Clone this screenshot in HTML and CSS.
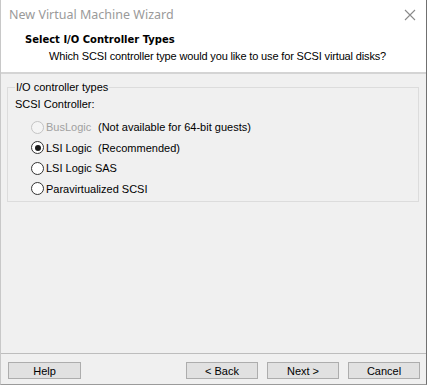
FILE: index.html
```html
<!DOCTYPE html>
<html>
<head>
<meta charset="utf-8">
<link rel="stylesheet" href="styles.css">
</head>
<body>
<div class="window">
  <div class="titlebar">
    <span class="title">New Virtual Machine Wizard</span>
    <svg class="close" width="12" height="12" viewBox="0 0 12 12"><path d="M1 1 L11 11 M11 1 L1 11" stroke="#8a8a8a" stroke-width="1.1" fill="none"/></svg>
  </div>
  <div class="header">
    <div class="h-title">Select I/O Controller Types</div>
    <div class="h-sub">Which SCSI controller type would you like to use for SCSI virtual disks?</div>
  </div>
  <div class="content">
    <fieldset class="group">
      <legend>I/O controller types</legend>
      <div class="label">SCSI Controller:</div>
      <div class="options">
        <div class="opt disabled"><span class="radio"></span><span class="name">BusLogic</span><span class="note">(Not available for 64-bit guests)</span></div>
        <div class="opt"><span class="radio checked"></span><span class="name">LSI Logic</span><span class="note">(Recommended)</span></div>
        <div class="opt"><span class="radio"></span><span class="name">LSI Logic SAS</span></div>
        <div class="opt"><span class="radio"></span><span class="name">Paravirtualized SCSI</span></div>
      </div>
    </fieldset>
  </div>
  <div class="footer">
    <button class="btn btn-help">Help</button>
    <div class="spacer"></div>
    <button class="btn">&lt; Back</button>
    <button class="btn">Next &gt;</button>
    <button class="btn">Cancel</button>
  </div>
</div>
</body>
</html>
```

FILE: styles.css
```css
* { box-sizing: border-box; }
html, body { margin: 0; padding: 0; background: #ffffff; }
body { width: 428px; height: 387px; overflow: hidden; font-family: "Liberation Sans", Arial, sans-serif; font-size: 11px; color: #000; }

.window {
  width: 427px;
  height: 385px;
  display: flex;
  flex-direction: column;
  background: #f0f0f0;
  border-right: 1px solid #707070;
  border-bottom: 1px solid #9a9a9a;
  border-left: 1px solid #c8c8c8;
}

.titlebar {
  height: 29px;
  background: #fff;
  display: flex;
  align-items: center;
  padding-left: 8px;
  padding-right: 10px;
}
.title { font-family: "Noto Sans", sans-serif; font-size: 12.5px; color: #9a9a9a; flex: 1; }
.close { display: block; }

.header {
  height: 45px;
  background: #fff;
  border-bottom: 2px solid #d4d4d4;
  padding-left: 24px;
  padding-top: 3px;
}
.h-title { font-family: "DejaVu Sans", sans-serif; font-weight: bold; font-size: 10px; line-height: 16px; }
.h-sub { padding-left: 24px; line-height: 17px; letter-spacing: -0.15px; }

.content { flex: 1; padding: 7px 7px 0 6px; }

.group {
  margin: 0;
  height: 121px;
  border: 1px solid #dcdcdc;
  padding: 2px 0 0 7px;
}
.group legend { padding: 0 1px; margin-left: 0; line-height: 13px; }
.label { line-height: 16px; margin-bottom: 5px; }
.options { display: flex; flex-direction: column; padding-left: 16px; }
.opt { display: flex; align-items: center; height: 20.5px; }
.radio {
  width: 13px; height: 13px; border: 1px solid #333; border-radius: 50%; background: #fff;
  margin-right: 2px; position: relative; flex: none;
}
.radio.checked::after {
  content: ""; position: absolute; left: 2.5px; top: 2.5px; width: 6px; height: 6px; border-radius: 50%; background: #1a1a1a;
}
.disabled .radio { border-color: #c4c4c4; background: #f4f4f4; }
.disabled .name { color: #a0a0a0; }
.name { width: 52px; white-space: nowrap; }
.note { white-space: nowrap; }

.footer {
  height: 31px;
  border-top: 1px solid #bdbdbd;
  display: flex;
  align-items: flex-start;
  padding: 8px 6px 0 7px;
  gap: 9px;
}
.spacer { flex: 1; }
.btn {
  width: 72px; height: 17px; margin: 0; padding: 0;
  background: #e1e1e1; border: 1px solid #adadad;
  font-family: "Liberation Sans", Arial, sans-serif; font-size: 11px; color: #000;
}
.btn-help { width: 73px; }
```
